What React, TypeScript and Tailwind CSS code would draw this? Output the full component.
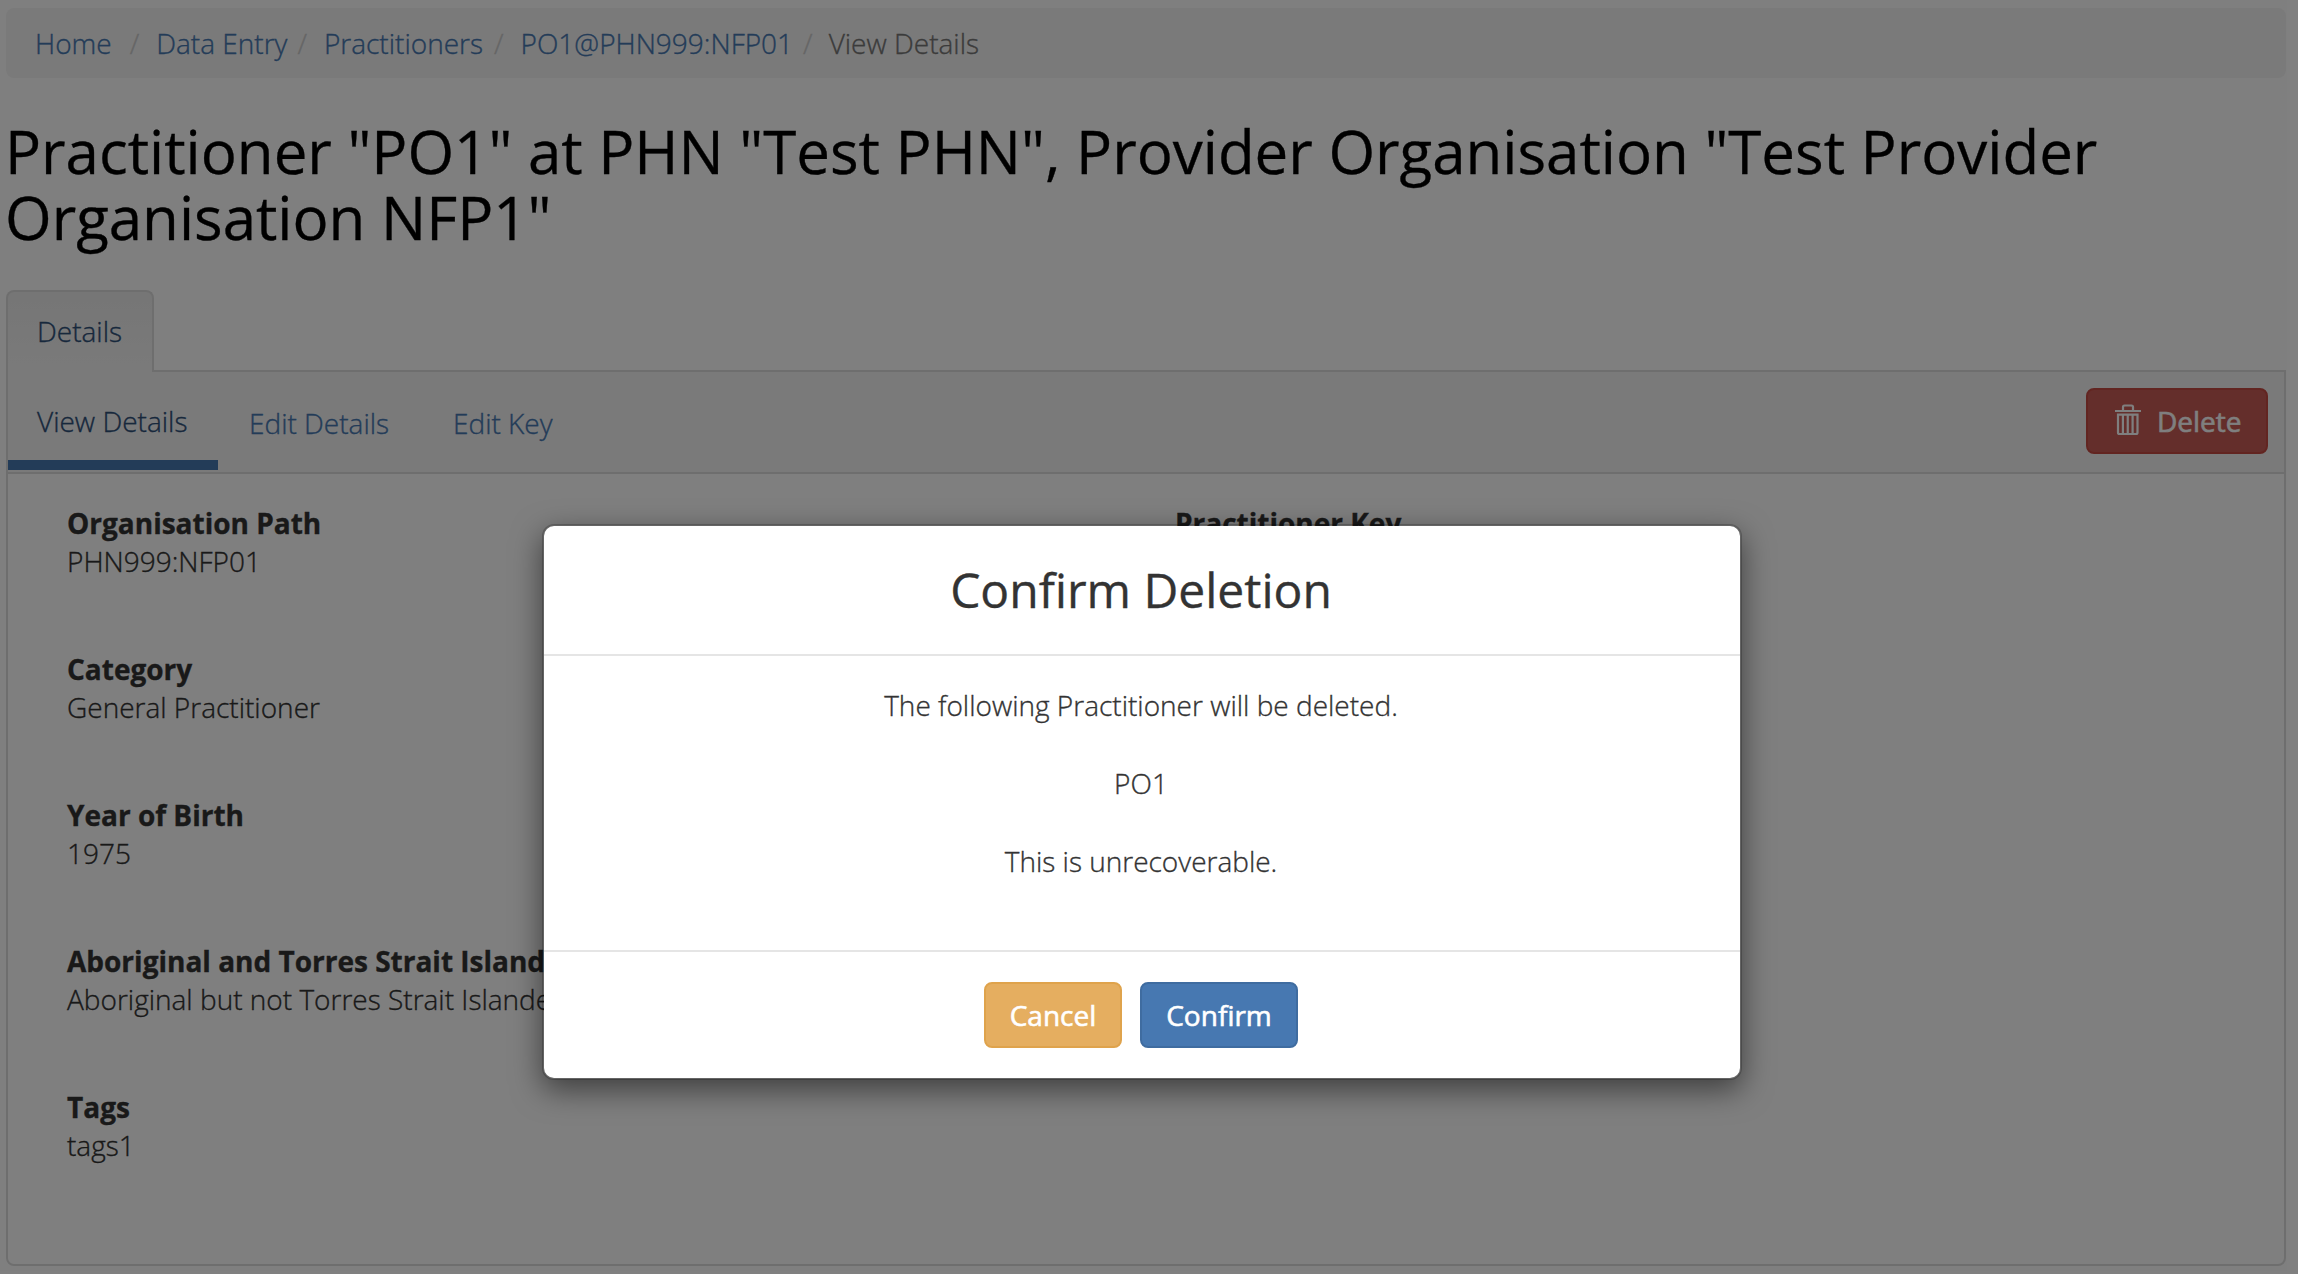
import React from "react";

const crumbs = [
  { text: "Home", sep: "pl-[18px] pr-[17px]" },
  { text: "Data Entry", sep: "pl-[10px] pr-[17px]" },
  { text: "Practitioners", sep: "pl-[11px] pr-[17px]" },
  { text: "PO1@PHN999:NFP01", sep: "pl-[10px] pr-[16px]" },
];

const left = [
  ["Organisation Path", "PHN999:NFP01"],
  ["Category", "General Practitioner"],
  ["Year of Birth", "1975"],
  ["Aboriginal and Torres Strait Islander Status", "Aboriginal but not Torres Strait Islander origin"],
  ["Tags", "tags1"],
];

function Trash() {
  return (
    <svg width="26" height="32" viewBox="0 0 26 32" fill="none" stroke="#fff" strokeWidth="2.2" className="mb-[3px] block shrink-0">
      <path d="M0 7H26M8 6.5V3Q8 1.5 9.5 1.5H16.5Q18 1.5 18 3V6.5" />
      <path d="M3 10.7V28.5Q3 30 4.5 30H21Q22.5 30 22.5 28.5V10.7Z" />
      <path d="M7.9 11V30M12.75 11V30M17.6 11V30" />
    </svg>
  );
}

export default function App() {
  return (
    <div className="relative h-[1274px] w-[2298px] overflow-hidden bg-white font-['Open_Sans',sans-serif] text-[28px] leading-[38px] font-light text-[#333] [-webkit-text-stroke-width:0.35px]">
      <div className="flex h-full flex-col pt-2 pr-3 pl-1.5">
        <nav className="flex h-[70px] shrink-0 items-center rounded-lg bg-[#f5f5f5] pl-[29px] text-[#4778b1]">
          {crumbs.map((c) => (
            <div key={c.text} className="flex">
              <a>{c.text}</a>
              <span className={`${c.sep} w-fit text-[#ccc]`}>/</span>
            </div>
          ))}
          <span className="text-[#777]">View Details</span>
        </nav>
        <h1 className="mt-[40px] -ml-px h-[132px] shrink-0 text-[60px] leading-[66px] font-normal text-black">
          Practitioner "PO1" at PHN "Test PHN", Provider Organisation "Test Provider
          <br />
          Organisation NFP1"
        </h1>
        <div className="z-10 mt-[40px] -mb-0.5 flex h-[82px] w-[148px] shrink-0 items-center rounded-t-lg border-2 border-b-0 border-[#ddd] bg-linear-to-b from-[#ececec] to-[#f5f5f5] pb-[2px] pl-[29px] text-[#2f5079]">
          Details
        </div>
        <div className="flex h-[896px] shrink-0 flex-col rounded-b-lg border-2 border-[#ddd]">
          <div className="flex h-[102px] shrink-0 items-center justify-between border-b-2 border-[#ddd] bg-[#f5f5f5] pr-4">
            <div className="flex h-full text-[#4778b1]">
              <div className="h-[98px] w-[210px] border-b-[10px] border-[#4778b1] pt-[30px] pl-[29px] text-[#2f5079]">View Details</div>
              <div className="w-[204px] pt-[32px] pl-[31px]">Edit Details</div>
              <div className="pt-[32px] pl-[31px]">Edit Key</div>
            </div>
            <button className="-mt-0.5 flex h-[66px] w-[182px] items-center rounded-lg border-2 border-[#c54a43] bg-[#c95c56] pl-[27px] font-normal text-white [-webkit-text-stroke-width:0.6px]">
              <Trash />
              <span className="mb-px ml-4">Delete</span>
            </button>
          </div>
          <div className="flex px-[59px] pt-[30px]">
            <div className="flex w-1/2 flex-col gap-[70px]">
              {left.map(([a, b]) => (
                <div key={a} className="whitespace-nowrap">
                  <div className="font-bold">{a}</div>
                  <div>{b}</div>
                </div>
              ))}
            </div>
            <div className="w-1/2 pl-[29px]">
              <div className="font-bold">Practitioner Key</div>
            </div>
          </div>
        </div>
      </div>
      <div className="absolute inset-0 z-20 bg-black/50">
        <div className="mt-[524px] ml-[542px] flex h-[556px] w-[1200px] flex-col rounded-xl border-2 border-black/20 bg-white bg-clip-padding text-center shadow-[0_10px_30px_rgba(0,0,0,0.5)]">
          <h2 className="h-[130px] border-b-2 border-[#e5e5e5] pt-[31px] pr-[2px] text-[48px] leading-[66px] font-normal">Confirm Deletion</h2>
          <div className="flex h-[296px] flex-col gap-10 border-b-2 border-[#e5e5e5] pt-[30px] pr-[2px]">
            <p>The following Practitioner will be deleted.</p>
            <p>PO1</p>
            <p>This is unrecoverable.</p>
          </div>
          <div className="flex gap-[18px] pt-[30px] pl-[440px] font-normal text-white [-webkit-text-stroke-width:0.6px]">
            <button className="h-[66px] w-[138px] rounded-lg border-2 border-[#dfa34c] bg-[#e5ae60]">Cancel</button>
            <button className="h-[66px] w-[158px] rounded-lg border-2 border-[#3f6ca0] bg-[#4778b1]">Confirm</button>
          </div>
        </div>
      </div>
    </div>
  );
}
